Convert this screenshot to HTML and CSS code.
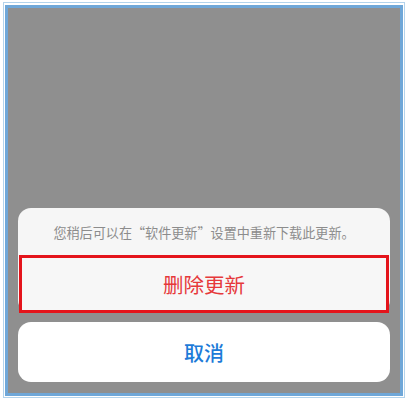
FILE: index.html
```html
<!DOCTYPE html>
<html lang="zh-CN">
<head>
<meta charset="utf-8">
<link rel="stylesheet" href="styles.css">
</head>
<body>
<div class="frame">
  <div class="screen">
    <div class="sheet">
      <div class="card">
        <div class="message">您稍后可以在“软件更新”设置中重新下载此更新。</div>
        <div class="delete">删除更新</div>
      </div>
      <div class="cancel">取消</div>
    </div>
  </div>
</div>
</body>
</html>
```
FILE: styles.css
```css
html, body {
  margin: 0;
  padding: 0;
  background: #ffffff;
}
body {
  width: 408px;
  height: 400px;
  font-family: "Noto Sans CJK SC", "Noto Sans", sans-serif;
}
.frame {
  margin: 2px 3px 1px 3px;
  border: 1px solid #b3d3ec;
  padding: 2px 1px 1px 1px;
}
.screen {
  border: 3px solid #6fa7d8;
  background: #8f8f8f;
  height: 385px;
  display: flex;
  flex-direction: column;
  justify-content: flex-end;
  box-sizing: content-box;
}
.sheet {
  padding: 0 10px 11px 10px;
  display: flex;
  flex-direction: column;
  gap: 9px;
}
.card {
  background: #f6f6f6;
  border-radius: 13px;
  display: flex;
  flex-direction: column;
}
.message {
  height: 47px;
  display: flex;
  align-items: center;
  justify-content: center;
  font-size: 13.1px;
  color: #8c8c8c;
  padding-top: 1px;
  box-sizing: border-box;
  white-space: nowrap;
}
.delete {
  height: 58px;
  margin: 0 1px;
  border: 3px solid #e4141b;
  display: flex;
  align-items: center;
  justify-content: center;
  font-size: 20.5px;
  color: #e6393b;
  box-sizing: border-box;
  background: #f7f7f7;
}
.cancel {
  height: 60px;
  background: #ffffff;
  border-radius: 13px;
  display: flex;
  align-items: center;
  justify-content: center;
  font-size: 20px;
  font-weight: 500;
  color: #1d7bd8;
}
```
